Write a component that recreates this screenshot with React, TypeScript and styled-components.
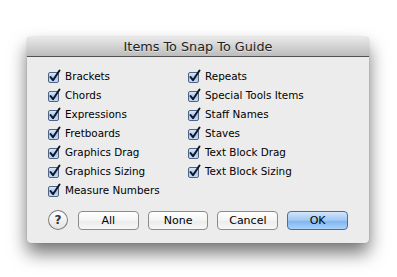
import React from "react";
import styled, { createGlobalStyle } from "styled-components";

const GlobalStyle = createGlobalStyle`
    html, body {
        margin: 0;
        padding: 0;
        background: #ffffff;
    }
    body {
        font-family: "DejaVu Sans", "Noto Sans", sans-serif;
    }
`;

const Page = styled.div`
    padding: 37px 0 0 27px;
    width: 397px;
    height: 277px;
    box-sizing: border-box;
`;

const Dialog = styled.div`
    width: 342px;
    background: #ececec;
    border-radius: 4px;
    box-shadow: 0 10px 18px rgba(0, 0, 0, 0.55), 0 0 1px rgba(0, 0, 0, 0.4);
    overflow: hidden;
`;

const TitleBar = styled.div`
    height: 19px;
    border-bottom: 1px solid #515151;
    background: linear-gradient(#e9e9e9, #bcbcbc);
    display: flex;
    align-items: center;
    justify-content: center;
    font-size: 12.8px;
    color: #222;
    text-shadow: 0 1px 0 rgba(255, 255, 255, 0.5);
`;

const Body = styled.div`
    padding: 9px 21px 13px 21px;
`;

const Options = styled.div`
    display: grid;
    grid-template-columns: 140px 1fr;
    grid-template-rows: repeat(7, 19px);
    grid-auto-flow: column;
`;

const Option = styled.label`
    display: flex;
    align-items: center;
    gap: 3px;
    font-size: 10.4px;
    color: #000;
`;

const Buttons = styled.div`
    display: flex;
    align-items: center;
    gap: 9px;
    margin-top: 11px;
`;

const HelpButton = styled.div`
    width: 18px;
    height: 18px;
    border-radius: 50%;
    border: 1px solid #7d7d7d;
    background: linear-gradient(#ffffff, #e3e3e3);
    display: flex;
    align-items: center;
    justify-content: center;
    font-size: 12px;
    font-weight: bold;
    color: #333;
    margin-right: 1px;
`;

const Button = styled.div<{ $primary?: boolean }>`
    width: 59px;
    height: 17px;
    border-radius: 4px;
    border: 1px solid ${p => (p.$primary ? "#4e6d9c" : "#8c8c8c")};
    background: ${p =>
        p.$primary
            ? "linear-gradient(#d3e6fb, #9cc6f4 50%, #7eb3ef 51%, #a9d2fb)"
            : "linear-gradient(#ffffff, #f4f4f4 50%, #ebebeb 51%, #f7f7f7)"};
    display: flex;
    align-items: center;
    justify-content: center;
    font-size: 11px;
    color: #000;
`;

function CheckBox() {
    return (
        <svg width="14" height="14" viewBox="0 0 14 14">
            <defs>
                <linearGradient id="cb" x1="0" y1="0" x2="0" y2="1">
                    <stop offset="0" stopColor="#dfeafb" />
                    <stop offset="0.5" stopColor="#a9c6ee" />
                    <stop offset="1" stopColor="#c7ddf8" />
                </linearGradient>
            </defs>
            <rect x="0.5" y="3.5" width="10" height="10" rx="1.5" fill="url(#cb)" stroke="#4f6382" />
            <path d="M2.5 8 L5 11.2 L11.5 1.5" fill="none" stroke="#0e1626" strokeWidth="2" strokeLinecap="round" strokeLinejoin="round" />
        </svg>
    );
}

const items = [
    "Brackets",
    "Chords",
    "Expressions",
    "Fretboards",
    "Graphics Drag",
    "Graphics Sizing",
    "Measure Numbers",
    "Repeats",
    "Special Tools Items",
    "Staff Names",
    "Staves",
    "Text Block Drag",
    "Text Block Sizing",
];

export default function App() {
    return (
        <Page>
            <GlobalStyle />
            <Dialog>
                <TitleBar>Items To Snap To Guide</TitleBar>
                <Body>
                    <Options>
                        {items.map(label => (
                            <Option key={label}>
                                <CheckBox />
                                {label}
                            </Option>
                        ))}
                    </Options>
                    <Buttons>
                        <HelpButton>?</HelpButton>
                        <Button>All</Button>
                        <Button>None</Button>
                        <Button>Cancel</Button>
                        <Button $primary>OK</Button>
                    </Buttons>
                </Body>
            </Dialog>
        </Page>
    );
}
